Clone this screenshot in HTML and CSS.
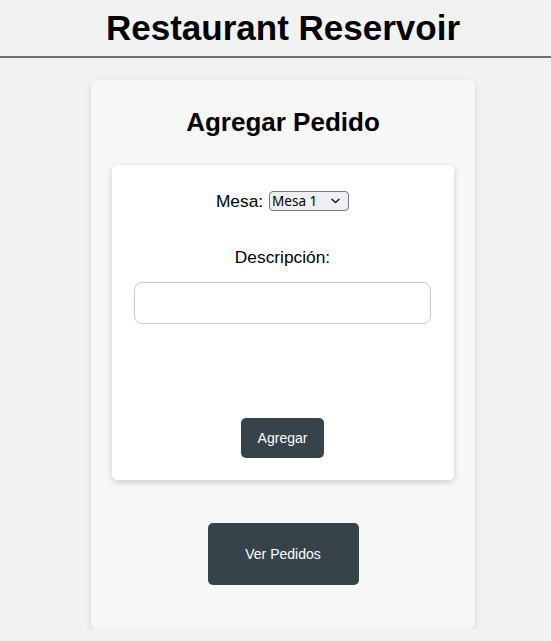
FILE: index.html
```html
<!DOCTYPE html>
<html lang="es">
<head>
<meta charset="utf-8">
<title>Restaurant Reservoir</title>
<link rel="stylesheet" href="styles.css">
</head>
<body>
<header class="site-header">
  <h1 class="site-title">Restaurant Reservoir</h1>
</header>
<main class="page">
  <section class="card">
    <h2 class="card-title">Agregar Pedido</h2>
    <form class="order-form">
      <div class="field-row">
        <label class="label" for="mesa">Mesa:</label>
        <span class="select-wrap">
          <select id="mesa" class="select">
            <option>Mesa 1</option>
            <option>Mesa 2</option>
            <option>Mesa 3</option>
          </select>
          <svg class="chevron" width="9" height="6" viewBox="0 0 9 6" aria-hidden="true"><path d="M1 1.2 L4.5 4.6 L8 1.2" fill="none" stroke="#000" stroke-width="1.3" stroke-linecap="round" stroke-linejoin="round"/></svg>
        </span>
      </div>
      <label class="label desc-label" for="desc">Descripción:</label>
      <input id="desc" class="text-input" type="text">
      <button type="button" class="btn btn-small">Agregar</button>
    </form>
    <button type="button" class="btn btn-large">Ver Pedidos</button>
  </section>
</main>
</body>
</html>
```
FILE: styles.css
```css
html, body {
  margin: 0;
  padding: 0;
}
body {
  background: #f2f2f2;
  font-family: "Liberation Sans", Arial, sans-serif;
  color: #000;
}
.site-header {
  padding: 7px 0 8px 15px;
  border-bottom: 2px solid #6e6e6e;
  text-align: center;
}
.site-title {
  margin: 0;
  font-size: 35px;
  font-weight: bold;
  line-height: 41px;
}
.page {
  display: flex;
  justify-content: center;
  padding: 22px 0 0 15px;
}
.card {
  width: 384px;
  box-sizing: border-box;
  background: #f7f7f7;
  border-radius: 6px;
  box-shadow: 0 2px 6px rgba(0,0,0,0.12);
  padding: 27px 21px 44px;
  display: flex;
  flex-direction: column;
  align-items: center;
}
.card-title {
  margin: 0 0 28px;
  font-size: 26px;
  line-height: 30px;
  font-weight: bold;
}
.order-form {
  align-self: stretch;
  background: #fff;
  border-radius: 5px;
  box-shadow: 0 2px 6px rgba(0,0,0,0.18);
  padding: 26px 23px 22px 22px;
  display: flex;
  flex-direction: column;
  align-items: center;
}
.field-row {
  display: flex;
  align-items: center;
  gap: 6px;
  height: 20px;
}
.label {
  font-size: 17.33px;
  line-height: 19px;
}
.select-wrap {
  position: relative;
  display: inline-flex;
}
.select {
  appearance: none;
  -webkit-appearance: none;
  width: 80px;
  height: 20px;
  box-sizing: border-box;
  margin: 0;
  padding: 0 0 0 2px;
  border: 1px solid #767676;
  border-radius: 4px;
  background: #efeff3;
  color: #000;
  font-family: "Noto Sans", "Open Sans", sans-serif;
  font-size: 13.5px;
  line-height: 18px;
}
.chevron {
  position: absolute;
  right: 9px;
  top: 7px;
  pointer-events: none;
}
.desc-label {
  margin-top: 37px;
}
.text-input {
  margin-top: 15px;
  width: 100%;
  height: 42px;
  box-sizing: border-box;
  border: 1px solid #cccccc;
  border-radius: 8px;
  background: #fff;
  font-size: 14px;
  padding: 0 10px;
}
.btn {
  border: none;
  background: #37434b;
  color: #fff;
  font-family: "Liberation Sans", Arial, sans-serif;
  font-size: 14px;
  border-radius: 5px;
  cursor: pointer;
}
.btn-small {
  margin-top: 94px;
  width: 83px;
  height: 40px;
}
.btn-large {
  margin-top: 43px;
  width: 151px;
  height: 62px;
}
```
